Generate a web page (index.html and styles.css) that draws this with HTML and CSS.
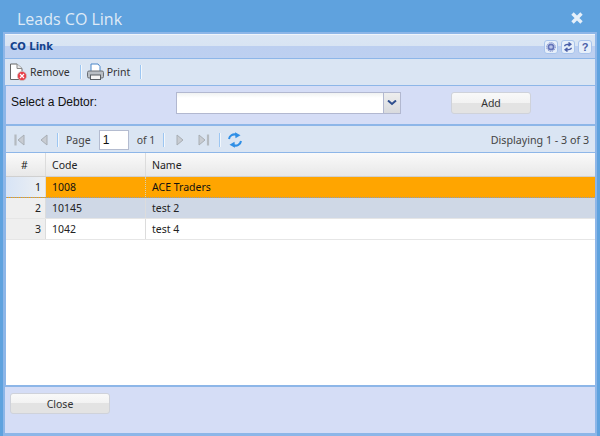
FILE: index.html
```html
<!DOCTYPE html>
<html lang="en">
<head>
<meta charset="utf-8">
<title>Leads CO Link</title>
<link rel="stylesheet" href="styles.css">
</head>
<body>
<div class="window">
  <div class="titlebar">
    <span class="title">Leads CO Link</span>
    <svg class="close-x" width="14" height="14" viewBox="0 0 14 14"><path d="M2.5 2.5L11.5 11.5M11.5 2.5L2.5 11.5" stroke="#e6f0fa" stroke-width="3.4" fill="none"/></svg>
  </div>
  <div class="body">
    <div class="panel-head">
      <span class="panel-title">CO Link</span>
      <div class="tools">
        <span class="tool"><svg width="10" height="10" viewBox="0 0 12 12"><circle cx="6" cy="6" r="3.2" fill="#b8c2e8" stroke="#6373b8" stroke-width="2"/><circle cx="6" cy="6" r="5.2" fill="none" stroke="#7585c6" stroke-width="1.2" stroke-dasharray="1.6 1.1"/></svg></span>
        <span class="tool"><svg width="10" height="10" viewBox="0 0 12 12"><path d="M2 5C2 3 4 2.6 8 2.6M6.6 .6L9.4 2.800 6.600 5M10 7C10 9 8 9.400 4 9.400M5.400 7L2.600 9.200 5.400 11.400" fill="none" stroke="#4a5fa8" stroke-width="1.700"/></svg></span>
        <span class="tool help">?</span>
      </div>
    </div>
    <div class="toolbar">
      <span class="tb-btn">
        <svg width="17" height="18" viewBox="0 0 17 18"><path d="M.5 1H7L12 5.500V16.500H.5Z" fill="#fff" stroke="#666"/><path d="M7 1V5.500H12" fill="#e8e8e8" stroke="#888"/><circle cx="12" cy="13" r="4.600" fill="#e8404a" stroke="#c8c8c8" stroke-width=".7"/><path d="M10 11L14 15M14 11L10 15" stroke="#fff" stroke-width="1.200"/></svg>
        Remove
      </span>
      <span class="sep"></span>
      <span class="tb-btn print">
        <svg width="17" height="18" viewBox="0 0 17 18"><path d="M4 1H11L13 3.500V9H4Z" fill="#fff" stroke="#4a86c8"/><rect x=".5" y="8" width="16" height="7" rx="1.500" fill="#b9bec4" stroke="#6a6f75"/><rect x="3.500" y="12" width="10" height="4.500" fill="#f4f4f4" stroke="#5a5f65"/></svg>
        Print
      </span>
      <span class="sep"></span>
    </div>
    <div class="form-row">
      <label class="form-label">Select a Debtor:</label>
      <div class="combo">
        <div class="combo-input"></div>
        <div class="combo-trigger"><svg width="10" height="6" viewBox="0 0 10 6"><path d="M1 .5L5 4 9 .5" fill="none" stroke="#2f4f8f" stroke-width="2"/></svg></div>
      </div>
      <button class="btn add-btn" type="button">Add</button>
    </div>
    <div class="grid-panel">
      <div class="paging">
        <svg class="pg-icon first" width="14" height="14" viewBox="0 0 14 14"><path d="M2.500 1.500V12.500" stroke="#b4bac0" stroke-width="2.200"/><path d="M11 2V12L5 7Z" fill="#c8ccd2" stroke="#a8aeb4"/></svg>
        <svg class="pg-icon prev" width="14" height="14" viewBox="0 0 14 14"><path d="M11 2V12L5 7Z" fill="#c8ccd2" stroke="#a8aeb4"/></svg>
        <span class="sep pg-sep"></span>
        <span class="pg-text">Page</span>
        <span class="pg-input">1</span>
        <span class="pg-text of">of 1</span>
        <span class="sep pg-sep"></span>
        <svg class="pg-icon next" width="14" height="14" viewBox="0 0 14 14"><path d="M3 2V12L9 7Z" fill="#c8ccd2" stroke="#a8aeb4"/></svg>
        <svg class="pg-icon last" width="14" height="14" viewBox="0 0 14 14"><path d="M2 2V12L8 7Z" fill="#c8ccd2" stroke="#a8aeb4"/><path d="M11 1.500V12.500" stroke="#b4bac0" stroke-width="2.200"/></svg>
        <span class="sep pg-sep"></span>
        <svg class="pg-refresh" width="16" height="16" viewBox="0 0 16 16"><path d="M2 7C2.500 3.500 6 1.500 9.500 2.800" fill="none" stroke="#2f8fe6" stroke-width="2"/><path d="M8 .3L13.500 3.300 8.500 6.300Z" fill="#2f8fe6"/><path d="M14 9C13.500 12.500 10 14.500 6.500 13.200" fill="none" stroke="#2f8fe6" stroke-width="2"/><path d="M8 15.700L2.500 12.700 7.500 9.700Z" fill="#2f8fe6"/></svg>
        <span class="pg-info">Displaying 1 - 3 of 3</span>
      </div>
      <div class="grid">
        <div class="row head">
          <div class="cell num">#</div>
          <div class="cell code">Code</div>
          <div class="cell name">Name</div>
        </div>
        <div class="row selected">
          <div class="cell num">1</div>
          <div class="cell code">1008</div>
          <div class="cell name">ACE Traders</div>
        </div>
        <div class="row alt">
          <div class="cell num">2</div>
          <div class="cell code">10145</div>
          <div class="cell name">test 2</div>
        </div>
        <div class="row">
          <div class="cell num">3</div>
          <div class="cell code">1042</div>
          <div class="cell name">test 4</div>
        </div>
      </div>
    </div>
    <div class="footer">
      <button class="btn close-btn" type="button">Close</button>
    </div>
  </div>
</div>
</body>
</html>
```
FILE: styles.css
```css
* { box-sizing: border-box; }
html, body { margin: 0; padding: 0; }
body { width: 600px; height: 436px; overflow: hidden; font-family: "Liberation Sans", Arial, sans-serif; }
.window { width: 600px; height: 436px; background: #5fa2de; display: flex; flex-direction: column; padding: 0 3px 0 3px; }
.titlebar { height: 32px; flex: none; display: flex; align-items: center; justify-content: space-between; padding: 6px 0 0 14px; }
.title { font-family: "Open Sans", sans-serif; font-size: 16px; color: #dfeaf6; }
.close-x { margin-right: 13px; margin-top: -2px; }
.body { flex: 1; min-height: 0; display: flex; flex-direction: column; background: #d5ddf6; border: 2px solid #8db6e8; border-bottom-width: 3px; }
.panel-head { height: 25px; flex: none; display: flex; align-items: center; justify-content: space-between; padding: 0 3px 0 5px; background: linear-gradient(#dbe6f4 0, #d8e4f3 46%, #bccff0 50%, #bdd0f0 100%); border-top: 1px solid #f0f5fb; border-bottom: 1px solid #8db6e8; }
.panel-title { font-family: "DejaVu Sans", sans-serif; font-weight: bold; font-size: 10px; color: #14438c; }
.tools { display: flex; gap: 3px; }
.tool { width: 14px; height: 14px; border: 1px solid #a9c4ec; border-radius: 3px; background: #e6effa; display: flex; align-items: center; justify-content: center; }
.tool svg { display: block; }
.help { font-weight: bold; font-size: 11px; color: #4a5fa8; }
.toolbar { height: 27px; flex: none; display: flex; align-items: center; gap: 7px; padding: 0 0 0 5px; background: #dae5f3; border-bottom: 1px solid #8db6e8; }
.tb-btn { display: flex; align-items: center; gap: 3px; font-family: "Noto Sans", sans-serif; font-size: 10.5px; color: #333; padding-right: 3px; }
.print { margin-left: -1px; padding-right: 3px; }
.sep { width: 1px; height: 14px; background: #9cc6f2; box-shadow: 1px 0 0 #f2f7fc; }
.form-row { height: 40px; flex: none; display: flex; align-items: flex-start; background: #d5ddf6; padding: 6px 0 0 5px; border-left: 1px solid #8db6e8; border-bottom: 2px solid #8db6e8; }
.form-label { width: 165px; font-size: 12px; color: #111; line-height: 20px; }
.combo { width: 225px; height: 22px; display: flex; border: 1px solid #b2b8d0; }
.combo-input { flex: 1; background: linear-gradient(#f0f2f2 0, #fff 5px); }
.combo-trigger { width: 17px; border-left: 1px solid #b2b8d0; background: linear-gradient(#eeeeee, #d8dade); display: flex; align-items: center; justify-content: center; }
.btn { font-family: "Noto Sans", sans-serif; font-size: 10.5px; color: #333; border: 1px solid #cfd2da; border-radius: 3px; background: linear-gradient(#f9f9f9 0, #f2f2f2 50%, #e3e3e3 50%, #e3e3e3 100%); padding: 0; }
.add-btn { width: 80px; height: 22px; margin-left: 50px; }
.grid-panel { flex: 1; min-height: 0; display: flex; flex-direction: column; background: #fff; border-left: 1px solid #8db6e8; }
.paging { height: 27px; flex: none; display: flex; align-items: center; padding: 2px 6px 0 0; background: #dae5f3; border-bottom: 1px solid #8db6e8; font-family: "Noto Sans", sans-serif; font-size: 10.5px; color: #444; }
.pg-icon { flex: none; }
.first { margin-left: 7px; }
.prev { margin-left: 9px; }
.prev + .pg-sep { margin-left: 7px; }
.pg-sep { margin: 0 8px 0 0; }
.pg-text { margin-right: 8px; }
.pg-input { width: 30px; height: 20px; border: 1px solid #b4bcd0; background: #fff; font-family: "Liberation Sans", sans-serif; font-size: 12px; color: #111; line-height: 18px; padding-left: 3px; margin-right: 8px; }
.next { margin-left: 2px; }
.last { margin-left: 9px; margin-right: 8px; }
.pg-refresh { margin-left: -1px; }
.pg-info { margin-left: auto; font-size: 10.7px; }
.grid { flex: 1; min-height: 0; font-family: "Noto Sans", sans-serif; font-size: 10.5px; color: #222; }
.row { display: flex; height: 21px; border-bottom: 1px solid #e6e6e6; }
.cell { border-right: 1px solid #dcdcdc; padding: 0 6px; line-height: 20px; }
.num { width: 40px; flex: none; text-align: right; background: #efefef; padding-right: 4px; }
.code { width: 100px; flex: none; }
.name { flex: 1; border-right: 0; }
.head { height: 24px; background: linear-gradient(#fafafa, #e8e8e8); border-bottom: 1px solid #d0d0d0; }
.head .cell { line-height: 24px; }
.head .num { background: none; text-align: center; padding: 0 2px 0 0; }
.selected { background: #ffa500; color: #111; border-bottom: 1px dotted #8a9bb8; }
.selected .num { background: linear-gradient(90deg, #d7e4f6, #eef0f2); }
.selected .code { border-right: 1px dotted #d8d0b0; }
.alt { background: #cfd8e6; }
.footer { height: 48px; flex: none; padding: 6px 0 0 5px; border-top: 2px solid #8db6e8; background: #d5ddf6; }
.close-btn { width: 100px; height: 21px; display: block; }
```
